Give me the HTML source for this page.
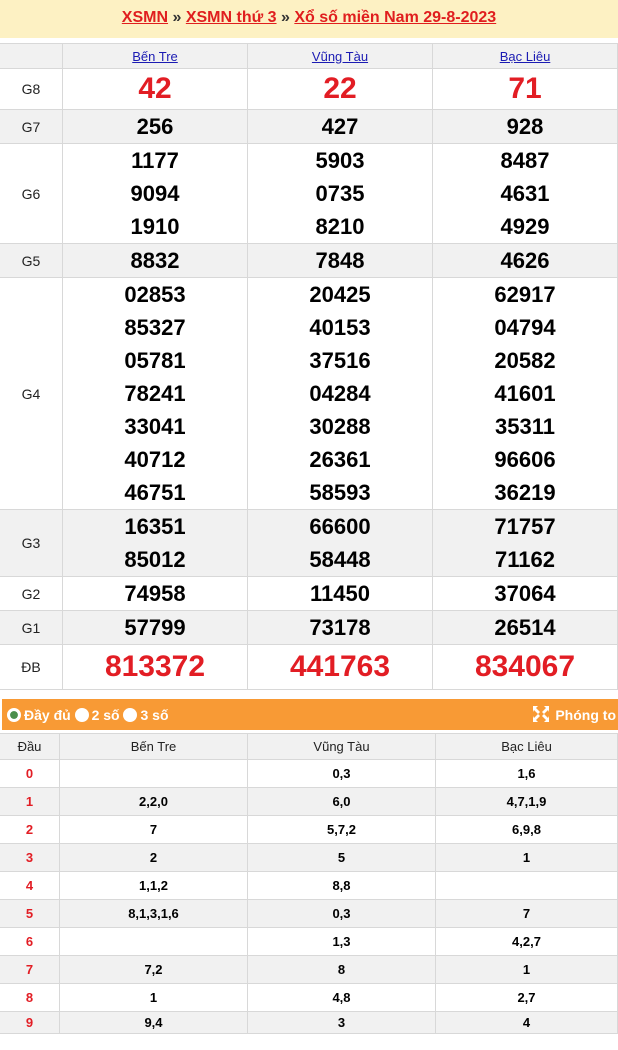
<!DOCTYPE html><html><head><meta charset="utf-8"><style>
*{margin:0;padding:0;box-sizing:border-box}
body{width:618px;height:1050px;background:#fff;font-family:"Liberation Sans",Arial,sans-serif;position:relative;overflow:hidden}
.top{position:absolute;left:0;top:0;width:618px;height:38px;background:#fdf1c3;text-align:center;font-size:16px;font-weight:bold;line-height:36px;color:#333}
.top a{color:#e01e1e;text-decoration:underline}
.c{position:absolute;border-right:1px solid #d8d8d8;border-bottom:1px solid #d8d8d8;text-align:center;display:flex;flex-direction:column;justify-content:center}
.g{background:#f1f1f1}
.lbl{font-size:14px;color:#222}
.n{font-size:22px;font-weight:bold;color:#000;line-height:33px}
.r{color:#e21d24;font-size:30px;line-height:40px}
.hd a{color:#1b1bb3;text-decoration:underline;font-size:13px}
.bar{position:absolute;left:2px;top:699px;width:616px;height:31px;background:#f89a35;color:#fff;font-weight:bold;font-size:14px}
.rad{display:inline-block;width:14px;height:14px;border-radius:50%;background:#fff;vertical-align:-2px;margin-right:3px}
.l{font-size:13px;color:#222}
.lb{font-size:13px;font-weight:bold;color:#000}
.red{color:#e21d24;font-weight:bold;font-size:13px}
</style></head><body>
<div class="top"><a>XSMN</a> » <a>XSMN thứ 3</a> » <a>Xổ số miền Nam 29-8-2023</a></div>
<div id="t"></div>
<div class="bar"><span style="position:absolute;left:5px;top:8px"><span class="rad" style="background:#fff;border:3px solid #fff;box-shadow:inset 0 0 0 6px #4c8f4c"></span>Đầy đủ <span class="rad"></span>2 số <span class="rad"></span>3 số</span>
<span style="position:absolute;right:2px;top:6px"><svg width="20" height="18" viewBox="0 0 20 18" style="vertical-align:-3px"><path d="M2 1h5l-2 2 4 4-2 2-4-4-1 2zM18 1h-5l2 2-4 4 2 2 4-4 1 2zM2 17h5l-2-2 4-4-2-2-4 4-1-2zM18 17h-5l2-2-4-4 2-2 4 4 1-2z" fill="#fff"/></svg> Phóng to</span></div>
<div id="b"></div>
<script>
let h='';
const X=[0,63,248,433,618];
function cell(x1,x2,y1,y2,cls,inner){h+=`<div class="c ${cls}" style="left:${x1}px;width:${x2-x1}px;top:${y1}px;height:${y2-y1}px">${inner}</div>`}
h+=`<div style="position:absolute;left:0;top:43px;width:618px;height:1px;background:#d8d8d8"></div>`;
cell(0,63,44,69,'g','');
['Bến Tre','Vũng Tàu','Bạc Liêu'].forEach((s,i)=>cell(X[i+1],X[i+2],44,69,'g hd',`<a>${s}</a>`));
const rows=[
['G8',69,110,[['42'],['22'],['71']],1],
['G7',110,144,[['256'],['427'],['928']]],
['G6',144,244,[['1177','9094','1910'],['5903','0735','8210'],['8487','4631','4929']]],
['G5',244,278,[['8832'],['7848'],['4626']]],
['G4',278,510,[['02853','85327','05781','78241','33041','40712','46751'],['20425','40153','37516','04284','30288','26361','58593'],['62917','04794','20582','41601','35311','96606','36219']]],
['G3',510,577,[['16351','85012'],['66600','58448'],['71757','71162']]],
['G2',577,611,[['74958'],['11450'],['37064']]],
['G1',611,645,[['57799'],['73178'],['26514']]],
['ĐB',645,690,[['813372'],['441763'],['834067']],1]];
rows.forEach((r,k)=>{const g=k%2?'g':'';cell(0,63,r[1],r[2],g+' lbl',r[0]);
r[3].forEach((v,i)=>cell(X[i+1],X[i+2],r[1],r[2],g,v.map(s=>`<div class="n${r[4]?' r':''}">${s}</div>`).join('')))});
const Y=[0,60,248,436,618];
h+=`<div style="position:absolute;left:0;top:733px;width:618px;height:1px;background:#d8d8d8"></div>`;
['Đầu','Bến Tre','Vũng Tàu','Bạc Liêu'].forEach((s,i)=>cell(Y[i],Y[i+1],734,760,'g l',s));
const d=[['','0,3','1,6'],['2,2,0','6,0','4,7,1,9'],['7','5,7,2','6,9,8'],['2','5','1'],['1,1,2','8,8',''],['8,1,3,1,6','0,3','7'],['','1,3','4,2,7'],['7,2','8','1'],['1','4,8','2,7'],['9,4','3','4']];
d.forEach((r,k)=>{const y1=760+k*28,y2=k==9?1034:y1+28;const g=k%2?'g':'';cell(0,60,y1,y2,g+' red',k);
r.forEach((s,i)=>cell(Y[i+1],Y[i+2],y1,y2,g+' lb',s))});
document.getElementById('t').outerHTML=h;
</script>
</body></html>
